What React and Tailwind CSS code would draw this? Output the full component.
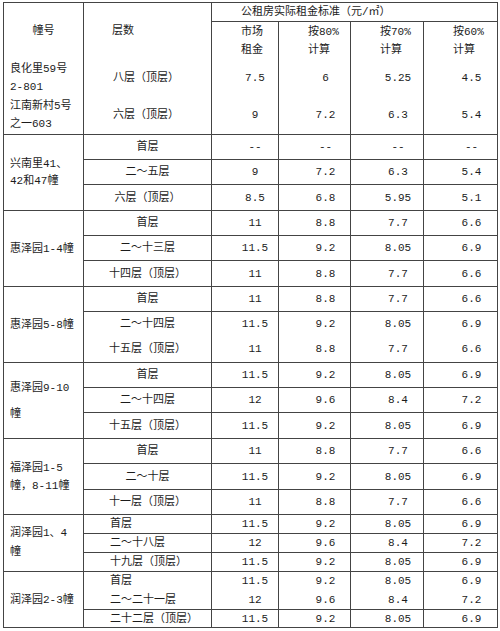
import React from 'react'

const groups = [
  {
    name: ['兴南里41、', '42和47幢'],
    lead: 'leading-[17px]',
    center: true,
    rows: [
      { h: 'h-[25px]', f: '首层', v: ['--', '--', '--', '--'] },
      { h: 'h-[25px]', f: '二～五层', v: ['9', '7.2', '6.3', '5.4'] },
      { h: 'h-[26px]', f: '六层（顶层）', v: ['8.5', '6.8', '5.95', '5.1'] },
    ],
  },
  {
    name: ['惠泽园1-4幢'],
    lead: 'leading-[18px]',
    center: true,
    rows: [
      { h: 'h-[25px]', f: '首层', v: ['11', '8.8', '7.7', '6.6'] },
      { h: 'h-[25px]', f: '二～十三层', v: ['11.5', '9.2', '8.05', '6.9'] },
      { h: 'h-[26px]', f: '十四层（顶层）', v: ['11', '8.8', '7.7', '6.6'] },
    ],
  },
  {
    name: ['惠泽园5-8幢'],
    lead: 'leading-[18px]',
    center: true,
    rows: [
      { h: 'h-[25px]', f: '首层', v: ['11', '8.8', '7.7', '6.6'] },
      { h: 'h-[25px]', f: '二～十四层', v: ['11.5', '9.2', '8.05', '6.9'] },
      { h: 'h-[26px]', f: '十五层（顶层）', v: ['11', '8.8', '7.7', '6.6'], nt: true },
    ],
  },
  {
    name: ['惠泽园9-10', '幢'],
    lead: 'leading-[26px]',
    center: true,
    rows: [
      { h: 'h-[25px]', f: '首层', v: ['11.5', '9.2', '8.05', '6.9'] },
      { h: 'h-[25px]', f: '二～十四层', v: ['12', '9.6', '8.4', '7.2'] },
      { h: 'h-[26px]', f: '十五层（顶层）', v: ['11.5', '9.2', '8.05', '6.9'] },
    ],
  },
  {
    name: ['福泽园1-5', '幢，8-11幢'],
    lead: 'leading-[18px]',
    center: true,
    rows: [
      { h: 'h-[25px]', f: '首层', v: ['11', '8.8', '7.7', '6.6'] },
      { h: 'h-[26px]', f: '二～十层', v: ['11.5', '9.2', '8.05', '6.9'] },
      { h: 'h-[25px]', f: '十一层（顶层）', v: ['11', '8.8', '7.7', '6.6'] },
    ],
  },
  {
    name: ['润泽园1、4', '幢'],
    lead: 'leading-[19px]',
    center: false,
    rows: [
      { h: 'h-[19px]', f: '首层', v: ['11.5', '9.2', '8.05', '6.9'] },
      { h: 'h-[19px]', f: '二～十八层', v: ['12', '9.6', '8.4', '7.2'] },
      { h: 'h-[19px]', f: '十九层（顶层）', v: ['11.5', '9.2', '8.05', '6.9'] },
    ],
  },
  {
    name: ['润泽园2-3幢'],
    lead: 'leading-[18px]',
    center: false,
    rows: [
      { h: 'h-[19px]', f: '首层', v: ['11.5', '9.2', '8.05', '6.9'] },
      { h: 'h-[19px]', f: '二～二十一层', v: ['12', '9.6', '8.4', '7.2'], nt: true },
      { h: 'h-[18px]', f: '二十二层（顶层）', v: ['11.5', '9.2', '8.05', '6.9'] },
    ],
  },
]

function App() {
  return (
    <div className="bg-white min-h-[631px] pt-[2px] pl-[3px] text-[11px] text-[#1c1c1c] font-['Liberation_Mono','Noto_Sans_CJK_SC',monospace]">
      <table className="table-fixed border-collapse border border-[#444] w-[494px]">
        <colgroup>
          <col className="w-[80px]" />
          <col className="w-[128px]" />
          <col className="w-[67px]" />
          <col className="w-[72px]" />
          <col className="w-[73px]" />
          <col className="w-[74px]" />
        </colgroup>
        <tbody>
          {/* 表头 */}
          <tr className="h-[19px]">
            <td rowSpan={2} className="border-x border-[#444] text-center">幢号</td>
            <td rowSpan={2} className="border-x border-[#444] pl-[28px] text-left">层数</td>
            <td colSpan={4} className="border-x border-b border-[#444] pl-[29px] text-left leading-[18px]">
              公租房实际租金标准（元/㎡）
            </td>
          </tr>
          <tr className="h-[38px]">
            <td className="border-x border-t border-[#444] pl-[29px] text-left leading-[18px]">市场<br />租金</td>
            <td className="border-x border-t border-[#444] pl-[29px] text-left leading-[18px]">按80%<br />计算</td>
            <td className="border-x border-t border-[#444] pl-[29px] text-left leading-[18px]">按70%<br />计算</td>
            <td className="border-x border-t border-[#444] pl-[29px] text-left leading-[18px]">按60%<br />计算</td>
          </tr>
          <tr className="h-[37px]">
            <td rowSpan={2} className="border-x border-[#444] pl-[6px] text-left leading-[18.5px]">
              良化里59号<br />2-801<br />江南新村5号<br />之一603
            </td>
            <td className="border-x border-[#444] pl-[29px] text-left">八层（顶层）</td>
            <td className="border-x border-[#444] pl-[20px] text-center">7.5</td>
            <td className="border-x border-[#444] pl-[22px] text-center">6</td>
            <td className="border-x border-[#444] pl-[22px] text-center">5.25</td>
            <td className="border-x border-[#444] pl-[22px] text-center">4.5</td>
          </tr>
          <tr className="h-[38px]">
            <td className="border-x border-[#444] pl-[29px] text-left">六层（顶层）</td>
            <td className="border-x border-[#444] pl-[20px] text-center">9</td>
            <td className="border-x border-[#444] pl-[22px] text-center">7.2</td>
            <td className="border-x border-[#444] pl-[22px] text-center">6.3</td>
            <td className="border-x border-[#444] pl-[22px] text-center">5.4</td>
          </tr>

          {/* 各小区 */}
          {groups.map((g) =>
            g.rows.map((r, i) => {
              const edge = r.nt ? 'border-x border-[#444]' : 'border-x border-t border-[#444]'
              return (
                <tr key={g.name.join('') + i} className={r.h}>
                  {i === 0 && (
                    <td rowSpan={3} className={`border-x border-t border-[#444] pl-[6px] text-left ${g.lead}`}>
                      {g.name.map((n, k) => (
                        <React.Fragment key={k}>
                          {k > 0 && <br />}
                          {n}
                        </React.Fragment>
                      ))}
                    </td>
                  )}
                  <td className={`${edge} leading-[16px] ${g.center ? 'text-center' : 'pl-[26px] text-left'}`}>{r.f}</td>
                  {r.v.map((v, k) => (
                    <td key={k} className={`${edge} leading-[16px] text-center ${k === 0 ? 'pl-[20px]' : 'pl-[22px]'}`}>
                      {v}
                    </td>
                  ))}
                </tr>
              )
            })
          )}
        </tbody>
      </table>
    </div>
  )
}

export default App
